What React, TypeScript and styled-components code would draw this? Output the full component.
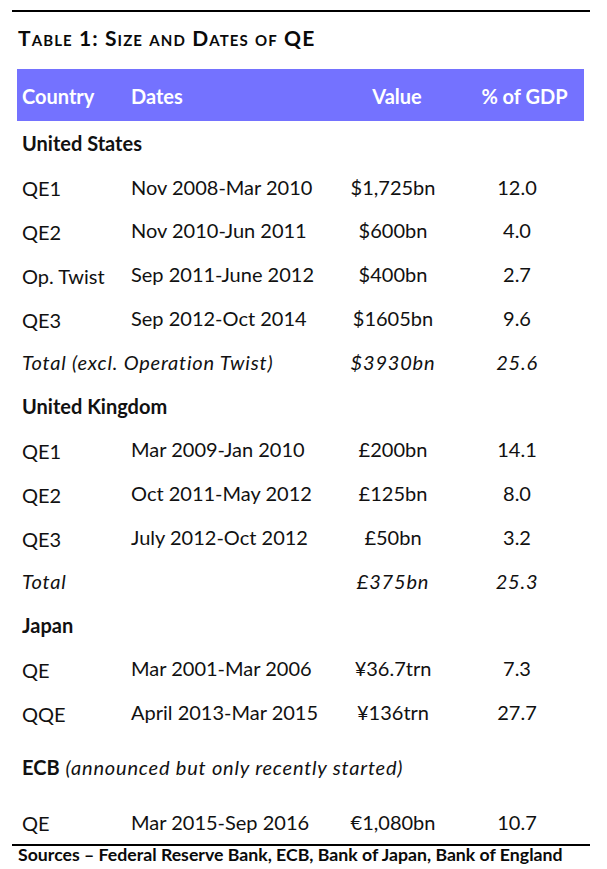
import React from "react";
import styled, { createGlobalStyle, css } from "styled-components";

const Global = createGlobalStyle`
  html, body { margin: 0; padding: 0; background: #ffffff; }
  body { font-family: Lato, "Open Sans", sans-serif; color: #111; }
`;

const Page = styled.div`
  width: 607px;
  height: 869px;
  padding-top: 10px;
  box-sizing: border-box;
  overflow: hidden;
`;

const Rule = styled.div`
  margin: 0 17px 0 12px;
  border-top: 2px solid #000;
`;

const Title = styled.h1`
  margin: 14px 0 0 18px;
  font-size: 21px;
  line-height: 24px;
  font-weight: 700;
  font-variant: small-caps;
  letter-spacing: 1.1px;
  color: #0a0a0a;
`;

const Table = styled.div`
  margin: 19px 23px 0 17px;
  display: grid;
  grid-template-columns: 109px 210px 114px 134px;
`;

const HeadCell = styled.div<{ $align?: "left" | "center"; $shift?: number }>`
  background: #7472ff;
  color: #fff;
  height: 52px;
  display: flex;
  align-items: center;
  font-size: 20px;
  font-weight: 700;
  justify-content: ${(p) => (p.$align === "center" ? "center" : "flex-start")};
  padding-left: ${(p) => (p.$align === "center" ? p.$shift ?? 0 : 5)}px;
  padding-top: 2px;
  box-sizing: border-box;
`;

const Cell = styled.div<{ $align?: "left" | "center"; $italic?: boolean; $first?: boolean }>`
  height: 43.8px;
  display: flex;
  align-items: center;
  font-size: 20px;
  color: #111;
  white-space: nowrap;
  justify-content: ${(p) => (p.$align === "center" ? "center" : "flex-start")};
  padding-left: ${(p) => (p.$align === "center" ? "0" : "5px")};
  padding-top: ${(p) => (p.$first ? "3px" : "0")};
  box-sizing: border-box;
  ${(p) =>
    p.$italic &&
    css`
      font-style: italic;
      letter-spacing: 0.8px;
    `}
`;

const WideCell = styled(Cell)`
  grid-column: 1 / 3;
`;

const Section = styled.div<{ $mt?: number }>`
  grid-column: 1 / -1;
  height: 43.8px;
  margin-top: ${(p) => p.$mt ?? 0}px;
  display: flex;
  align-items: center;
  padding-left: 5px;
  font-size: 20px;
  color: #111;
  box-sizing: border-box;
`;

const Bold = styled.span`
  font-weight: 700;
`;

const Note = styled.span`
  font-style: italic;
  margin-left: 6px;
  letter-spacing: 0.8px;
`;

const Spacer = styled.div<{ $h: number }>`
  grid-column: 1 / -1;
  height: ${(p) => p.$h}px;
`;

const FootRule = styled.div`
  margin: 0 17px 0 12px;
  border-top: 2px solid #000;
`;

const Source = styled.div`
  margin: 0 0 0 18px;
  font-size: 17.7px;
  font-weight: 700;
  color: #0a0a0a;
  line-height: 18px;
  white-space: nowrap;
`;

type Row = [string, string, string, string];

const us: Row[] = [
  ["QE1", "Nov 2008-Mar 2010", "$1,725bn", "12.0"],
  ["QE2", "Nov 2010-Jun 2011", "$600bn", "4.0"],
  ["Op. Twist", "Sep 2011-June 2012", "$400bn", "2.7"],
  ["QE3", "Sep 2012-Oct 2014", "$1605bn", "9.6"],
];
const uk: Row[] = [
  ["QE1", "Mar 2009-Jan 2010", "£200bn", "14.1"],
  ["QE2", "Oct 2011-May 2012", "£125bn", "8.0"],
  ["QE3", "July 2012-Oct 2012", "£50bn", "3.2"],
];
const jp: Row[] = [
  ["QE", "Mar 2001-Mar 2006", "¥36.7trn", "7.3"],
  ["QQE", "April 2013-Mar 2015", "¥136trn", "27.7"],
];

const DataRow: React.FC<{ r: Row }> = ({ r }) => (
  <>
    <Cell $first>{r[0]}</Cell>
    <Cell>{r[1]}</Cell>
    <Cell $align="center">{r[2]}</Cell>
    <Cell $align="center">{r[3]}</Cell>
  </>
);

const TotalRow: React.FC<{ label: string; value: string; pct: string }> = ({ label, value, pct }) => (
  <>
    <WideCell $italic>{label}</WideCell>
    <Cell $italic $align="center">{value}</Cell>
    <Cell $italic $align="center">{pct}</Cell>
  </>
);

export default function App() {
  return (
    <Page>
      <Global />
      <Rule />
      <Title>Table 1: Size and Dates of QE</Title>
      <Table>
        <HeadCell>Country</HeadCell>
        <HeadCell>Dates</HeadCell>
        <HeadCell $align="center" $shift={8}>Value</HeadCell>
        <HeadCell $align="center" $shift={15}>% of GDP</HeadCell>

        <Section><Bold>United States</Bold></Section>
        {us.map((r, i) => (
          <DataRow key={"us" + i} r={r} />
        ))}
        <TotalRow label="Total (excl. Operation Twist)" value="$3930bn" pct="25.6" />

        <Section><Bold>United Kingdom</Bold></Section>
        {uk.map((r, i) => (
          <DataRow key={"uk" + i} r={r} />
        ))}
        <TotalRow label="Total" value="£375bn" pct="25.3" />

        <Section><Bold>Japan</Bold></Section>
        {jp.map((r, i) => (
          <DataRow key={"jp" + i} r={r} />
        ))}

        <Section $mt={11}>
          <Bold>ECB</Bold>
          <Note>(announced but only recently started)</Note>
        </Section>
        <Spacer $h={11} />
        <DataRow r={["QE", "Mar 2015-Sep 2016", "€1,080bn", "10.7"]} />
      </Table>
      <FootRule />
      <Source>Sources – Federal Reserve Bank, ECB, Bank of Japan, Bank of England</Source>
    </Page>
  );
}
